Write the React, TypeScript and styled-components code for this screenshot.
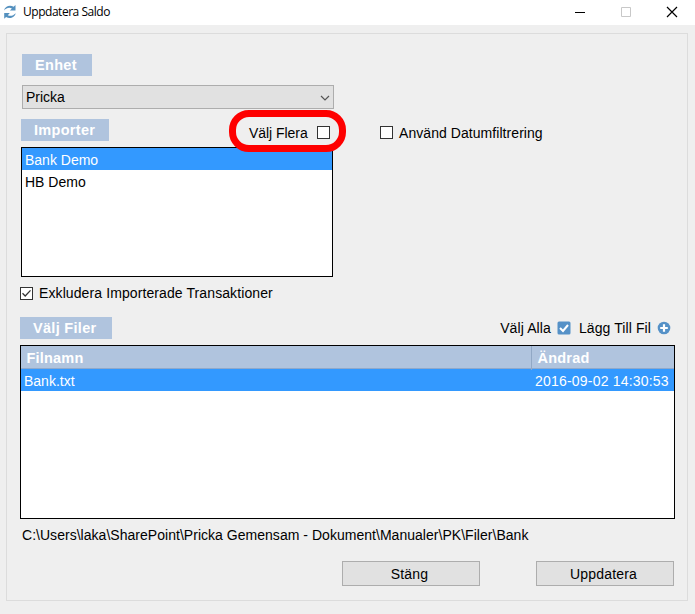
import React from "react";
import styled, { createGlobalStyle } from "styled-components";

const GlobalStyle = createGlobalStyle`
  * { box-sizing: border-box; }
  html, body { margin: 0; overflow: hidden; }
  body { background: #efefef; }
`;

const Window = styled.main`
  width: 695px;
  height: 614px;
  display: flex;
  flex-direction: column;
  background: #efefef;
  color: #000;
  font: 14px/22px "Liberation Sans", Arial, sans-serif;
  white-space: nowrap;
`;

const TitleBar = styled.header`
  height: 25px;
  flex: none;
  display: flex;
  align-items: center;
  padding: 0 17px 1px 3px;
  background: #fff;
`;

const Title = styled.h1`
  margin: 0 auto 0 6px;
  font: 400 12px/16px "Open Sans", "Noto Sans", sans-serif;
  letter-spacing: -0.47px;
`;

const WindowControls = styled.div`
  display: flex;
  gap: 34px;
`;

const Panel = styled.section`
  width: 682px;
  height: 568px;
  margin: 8px 0 0 6px;
  padding: 20px 12px 0 13px;
  border: 1px solid #dcdcdc;
  display: flex;
  flex-direction: column;
`;

const Row = styled.div<{ $top?: number; $left?: number; $height?: number }>`
  display: flex;
  align-items: center;
  flex: none;
  height: ${(p) => p.$height ?? 22}px;
  margin-top: ${(p) => p.$top ?? 0}px;
  padding-left: ${(p) => p.$left ?? 0}px;
`;

const SectionLabel = styled.h2<{ $width: number }>`
  width: ${(p) => p.$width}px;
  height: 22px;
  margin: 0;
  padding-left: 13px;
  background: #b0c4de;
  color: #fff;
  font: 700 14.5px/23px "Liberation Sans", Arial, sans-serif;
  letter-spacing: 0.3px;
`;

const Text = styled.span<{ $spacing?: number }>`
  line-height: 22px;
  letter-spacing: ${(p) => p.$spacing ?? 0.1}px;
`;

const Select = styled.div`
  width: 312px;
  height: 24px;
  padding: 0 3px;
  display: flex;
  align-items: center;
  justify-content: space-between;
  border: 1px solid #adadad;
  background: #e1e1e1;
`;

const CheckBox = styled.span`
  width: 13px;
  height: 13px;
  flex: none;
  display: block;
  border: 1px solid #333;
  background: #fff;
  svg { display: block; }
`;

const MultiSelect = styled.label`
  position: relative;
  display: flex;
  align-items: center;
  justify-content: space-between;
  width: 81px;
  margin-left: 140px;
  padding-top: 5px;
`;

const Highlight = styled.span`
  position: absolute;
  z-index: 1;
  left: -20px;
  top: -7px;
  width: 117px;
  height: 42px;
  border: 7px solid #fe0000;
  border-radius: 20px;
`;

const DateFilter = styled.label`
  display: flex;
  align-items: center;
  gap: 6px;
  margin-left: 50px;
  padding-top: 5px;
`;

const ListBox = styled.div`
  width: 312px;
  height: 130px;
  flex: none;
  margin: 6px 0 0 1px;
  border: 1px solid #000;
  background: #fff;
`;

const ListItem = styled.div<{ $selected?: boolean }>`
  height: 22px;
  padding-left: 3px;
  line-height: 25px;
  background: ${(p) => (p.$selected ? "#3399ff" : "transparent")};
  color: ${(p) => (p.$selected ? "#fff" : "#000")};
`;

const FileActions = styled.div`
  display: flex;
  align-items: center;
  margin-left: auto;
  margin-right: 4px;
  gap: 6px;
  svg { display: block; }
`;

const FileTable = styled.div`
  width: 655px;
  height: 174px;
  flex: none;
  margin-top: 6px;
  border: 1px solid #000;
  background: #fff;
`;

const FileRow = styled.div<{ $header?: boolean }>`
  display: grid;
  grid-template-columns: 511px 1fr;
  height: ${(p) => (p.$header ? 23 : 22)}px;
  line-height: ${(p) => (p.$header ? 24 : 25)}px;
  background: ${(p) => (p.$header ? "#b0c4de" : "#3399ff")};
  border-bottom: ${(p) => (p.$header ? "1px solid #8fa9cb" : "0")};
  color: #fff;
  font-size: ${(p) => (p.$header ? 14.5 : 14)}px;
  font-weight: ${(p) => (p.$header ? 700 : 400)};
  letter-spacing: 0.2px;
  > span { padding-left: ${(p) => (p.$header ? 5.5 : 3)}px; }
  > span:first-child {
    letter-spacing: ${(p) => (p.$header ? 0.2 : 0)}px;
    border-right: ${(p) => (p.$header ? "1px solid #91a8c5" : "0")};
  }
`;

const Buttons = styled.div`
  display: flex;
  justify-content: flex-end;
  gap: 56px;
  margin: 15px 1px 0 0;
`;

const Button = styled.button`
  width: 138px;
  height: 25px;
  padding: 1px 3px 0 0;
  border: 1px solid #adadad;
  border-radius: 0;
  background: #e1e1e1;
  color: #000;
  font: 14px/20px "Liberation Sans", Arial, sans-serif;
  letter-spacing: 0.2px;
`;

const RefreshIcon = () => (
  <svg width="14" height="16" viewBox="0 0 14 16">
    <g fill="#5591bf">
      <path d="M1 6.5C1.8 2.4 6.8.3 10.6 2.7L12.5 1V6.6H6.9L8.9 4.5C6 3 3.4 4.2 1 6.5Z" />
      <path d="M12.7 9.2C11.9 13.3 6.9 15.4 3.1 13L1.2 14.7V9.1H6.8L4.8 11.2C7.7 12.7 10.3 11.5 12.7 9.2Z" />
    </g>
  </svg>
);

export default function App() {
  return (
    <Window>
      <GlobalStyle />
      <TitleBar>
        <RefreshIcon />
        <Title>Uppdatera Saldo</Title>
        <WindowControls>
          <svg width="12" height="12"><path d="M1 6.5H11" stroke="#000" /></svg>
          <svg width="12" height="12"><path d="M1.5 1.5H10.5V10.5H1.5Z" stroke="#c8c8c8" fill="none" /></svg>
          <svg width="12" height="12"><path d="M1 1L11 11M11 1L1 11" stroke="#000" strokeWidth="1.2" /></svg>
        </WindowControls>
      </TitleBar>
      <Panel>
        <Row $left={2}><SectionLabel $width={70}>Enhet</SectionLabel></Row>
        <Row $top={9} $left={2} $height={24}>
          <Select>
            <Text $spacing={0}>Pricka</Text>
            <svg width="10" height="8"><path d="M1 3L5 7L9 3" fill="none" stroke="#555" strokeWidth="1.2" /></svg>
          </Select>
        </Row>
        <Row $top={10} $left={1}>
          <SectionLabel $width={88}>Importer</SectionLabel>
          <MultiSelect>
            <Text $spacing={-0.05}>Välj Flera</Text>
            <CheckBox />
            <Highlight />
          </MultiSelect>
          <DateFilter>
            <CheckBox />
            <Text $spacing={0.06}>Använd Datumfiltrering</Text>
          </DateFilter>
        </Row>
        <ListBox>
          <ListItem $selected>Bank Demo</ListItem>
          <ListItem>HB Demo</ListItem>
        </ListBox>
        <Row $top={5}>
          <CheckBox>
            <svg width="11" height="11"><path d="M1.5 5.3L4.2 8L9.5 2.4" fill="none" stroke="#333" strokeWidth="1.3" /></svg>
          </CheckBox>
          <Row $left={6}><Text>Exkludera Importerade Transaktioner</Text></Row>
        </Row>
        <Row $top={13}>
          <SectionLabel $width={92}>Välj Filer</SectionLabel>
          <FileActions>
            <Text>Välj Alla</Text>
            <svg width="14" height="14"><rect x=".5" y=".5" width="13" height="13" rx="1.5" fill="#5591c7" /><path d="M3 7L6 10L11 4" stroke="#fff" strokeWidth="2" fill="none" /></svg>
            <Row $left={2}><Text>Lägg Till Fil</Text></Row>
            <svg width="14" height="14"><circle cx="7" cy="7" r="6.3" fill="#5591c7" /><path d="M3.2 7H10.8M7 3.2V10.8" stroke="#fff" strokeWidth="2.2" /></svg>
          </FileActions>
        </Row>
        <FileTable>
          <FileRow $header><span>Filnamn</span><span>Ändrad</span></FileRow>
          <FileRow><span>Bank.txt</span><span>2016-09-02 14:30:53</span></FileRow>
        </FileTable>
        <Row $top={5} $left={2}><Text $spacing={0.03}>C:\Users\laka\SharePoint\Pricka Gemensam - Dokument\Manualer\PK\Filer\Bank</Text></Row>
        <Buttons><Button>Stäng</Button><Button>Uppdatera</Button></Buttons>
      </Panel>
    </Window>
  );
}
